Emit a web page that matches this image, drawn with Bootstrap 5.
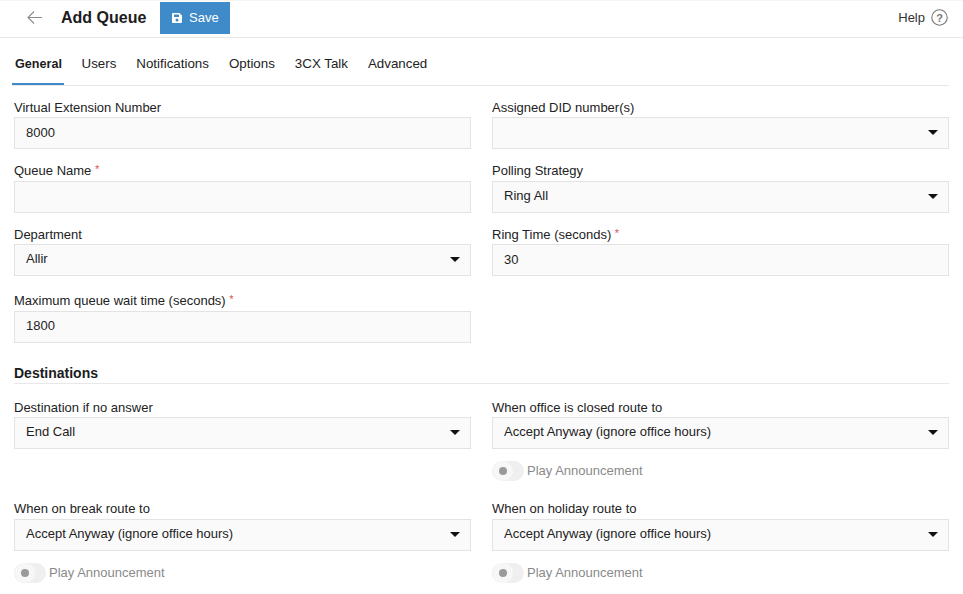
<!DOCTYPE html>
<html lang="en">
<head>
<meta charset="utf-8">
<title>Add Queue</title>
<link href="https://cdn.jsdelivr.net/npm/bootstrap@5.3.0/dist/css/bootstrap.min.css" rel="stylesheet">
<style>
html,body{height:594px;overflow:hidden;background:#fff}
body{font-family:"Liberation Sans",Arial,sans-serif;font-size:13px;color:#222;}
.top-bar{height:38px;border-top:1px solid #f6f6f6;border-bottom:1px solid #e8e8e8;padding-left:27px;padding-right:15px}
.back-arrow{width:15px;height:13px;margin-right:19px;margin-bottom:3px;flex:none}
.page-title{font-size:16px;font-weight:700;margin:0 14px 3px 0;color:#1c1c1c;line-height:1}
.save-btn{background:#3f8ac9;border:0;border-radius:0;color:#fff;font-size:13px;height:32px;width:70px;padding:0;margin-top:-2px;display:flex;align-items:center;justify-content:center;gap:7px}
.help-link{color:#333;font-size:13px;text-decoration:none;gap:6px;margin-bottom:3px}
.tab-strip{margin:16px 14px 0 12px;border-bottom:1px solid #e8e8e8;height:32px;flex-wrap:nowrap;gap:0}
.tab-strip .nav-link{color:#222;font-size:13.33px;padding:0;height:31px;border-radius:0;margin-right:20px;line-height:20px}
.tab-strip .nav-link.active{font-weight:700;font-size:12.6px;color:#1c1c1c;border-bottom:2px solid #3f8ac9;margin:0 17.5px 0 0;padding:0 0 0 3px;width:52px;white-space:nowrap;text-align:left}
.form-area{padding:14.5px 14px 0}
.field-grid{--bs-gutter-x:21px;--bs-gutter-y:0;margin-left:-10.5px;margin-right:-10.5px}
.field-label{display:block;font-size:13px;line-height:14px;height:14px;margin:0 0 2.5px;color:#222}
.req{color:#d9534f;font-size:11px;line-height:0;vertical-align:2px}
.field-box{height:32px;border:1px solid #e3e3e3;border-radius:0;background-color:#fafafa;font-size:13px;color:#222;padding:0 11px 2px;box-shadow:none}
.form-select.field-box{background-image:url("data:image/svg+xml,%3Csvg xmlns='http://www.w3.org/2000/svg' viewBox='0 0 10 5'%3E%3Cpath d='M0 0h10L5 5z' fill='%23111'/%3E%3C/svg%3E");background-size:10px 5px;background-position:right 10px top 12px;padding:0 30px 2px 11px}
.field-cell{margin-bottom:15px}
.field-cell.wide-gap{margin-bottom:18px}
.field-cell.tall{margin-bottom:0}
.block-title{font-size:14px;font-weight:700;color:#1c1c1c;line-height:16px;margin:22.5px 0 16.5px;padding-bottom:2px;border-bottom:1px solid #e8e8e8}
.swatch-row{height:20px;margin-top:12px;gap:3px;color:#8a8a8a;font-size:13px;margin-bottom:21px}
.toggle-track{width:32px;height:20px;border-radius:10px;background:#efefef;display:flex;align-items:center;flex:none}
.toggle-knob{width:20px;height:20px;margin-left:1px;border-radius:50%;background:#f7f7f7;display:flex;align-items:center;justify-content:center}
.toggle-knob::after{content:"";width:8px;height:8px;border-radius:50%;background:#9a9a9a}
</style>
</head>
<body>
<header class="top-bar d-flex align-items-center">
  <svg class="back-arrow" viewBox="0 0 15 13" fill="none" stroke="#8c8c8c" stroke-width="1.1"><path d="M15 6.500H1M7 .5 1 6.500l6 6"/></svg>
  <h1 class="page-title">Add Queue</h1>
  <button class="btn save-btn" type="button">
    <svg width="10" height="10" viewBox="0 0 10 10"><path fill="#fff" fill-rule="evenodd" d="M1 0h6.500L10 2.500V9a1 1 0 0 1-1 1H1a1 1 0 0 1-1-1V1a1 1 0 0 1 1-1zM2 1.500V4h5V1.500zM5 5.500a1.500 1.500 0 1 0 0 3 1.500 1.500 0 0 0 0-3z"/></svg>
    Save
  </button>
  <a class="help-link d-flex align-items-center ms-auto" href="#">Help
    <svg width="17" height="17" viewBox="0 0 17 17"><circle cx="8.500" cy="8.500" r="7.700" fill="none" stroke="#777" stroke-width="1.100"/><text x="8.500" y="12.500" text-anchor="middle" font-size="11" font-weight="700" fill="#777" font-family="Liberation Sans">?</text></svg>
  </a>
</header>
<ul class="nav tab-strip">
  <li class="nav-item"><a class="nav-link active" href="#">General</a></li>
  <li class="nav-item"><a class="nav-link" href="#">Users</a></li>
  <li class="nav-item"><a class="nav-link" href="#">Notifications</a></li>
  <li class="nav-item"><a class="nav-link" href="#">Options</a></li>
  <li class="nav-item"><a class="nav-link" href="#">3CX Talk</a></li>
  <li class="nav-item"><a class="nav-link" href="#">Advanced</a></li>
</ul>
<main class="form-area">
  <div class="row field-grid">
    <div class="col-6 field-cell"><label class="field-label">Virtual Extension Number</label><input class="form-control field-box" value="8000"></div>
    <div class="col-6 field-cell"><label class="field-label">Assigned DID number(s)</label><select class="form-select field-box"><option></option></select></div>
    <div class="col-6 field-cell"><label class="field-label">Queue Name <span class="req">*</span></label><input class="form-control field-box"></div>
    <div class="col-6 field-cell"><label class="field-label">Polling Strategy</label><select class="form-select field-box"><option>Ring All</option></select></div>
    <div class="col-6 field-cell wide-gap"><label class="field-label">Department</label><select class="form-select field-box"><option>Allir</option></select></div>
    <div class="col-6 field-cell wide-gap"><label class="field-label">Ring Time (seconds) <span class="req">*</span></label><input class="form-control field-box" value="30"></div>
    <div class="col-6 field-cell tall"><label class="field-label">Maximum queue wait time (seconds) <span class="req">*</span></label><input class="form-control field-box" value="1800"></div>
  </div>
  <h2 class="block-title">Destinations</h2>
  <div class="row field-grid">
    <div class="col-6 field-cell tall"><label class="field-label">Destination if no answer</label><select class="form-select field-box"><option>End Call</option></select></div>
    <div class="col-6 field-cell tall"><label class="field-label">When office is closed route to</label><select class="form-select field-box"><option>Accept Anyway (ignore office hours)</option></select>
      <div class="swatch-row d-flex align-items-center"><span class="toggle-track"><span class="toggle-knob"></span></span>Play Announcement</div></div>
    <div class="col-6 field-cell tall"><label class="field-label">When on break route to</label><select class="form-select field-box"><option>Accept Anyway (ignore office hours)</option></select>
      <div class="swatch-row d-flex align-items-center"><span class="toggle-track"><span class="toggle-knob"></span></span>Play Announcement</div></div>
    <div class="col-6 field-cell tall"><label class="field-label">When on holiday route to</label><select class="form-select field-box"><option>Accept Anyway (ignore office hours)</option></select>
      <div class="swatch-row d-flex align-items-center"><span class="toggle-track"><span class="toggle-knob"></span></span>Play Announcement</div></div>
  </div>
</main>
<script src="https://cdn.jsdelivr.net/npm/bootstrap@5.3.0/dist/js/bootstrap.bundle.min.js"></script>
</body>
</html>
